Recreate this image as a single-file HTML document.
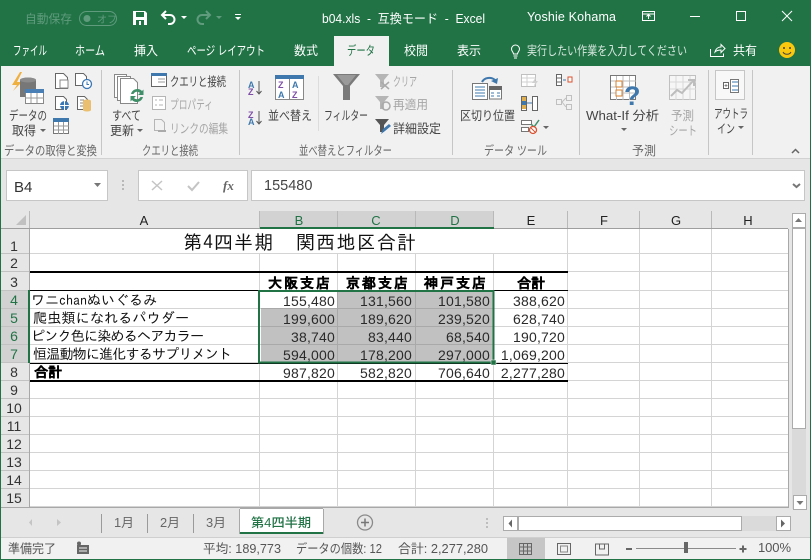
<!DOCTYPE html>
<html lang="ja"><head><meta charset="utf-8"><title>b04.xls</title>
<style>
html,body{margin:0;padding:0;background:#e6e6e6;width:811px;height:560px;overflow:hidden}
svg{display:block}
text{font-family:"Liberation Sans","Noto Sans CJK JP",sans-serif;white-space:pre}
.u{font-size:12.5px;fill:#444}
.g{font-size:12.5px;fill:#a6a6a6}
.l{font-size:12.5px;fill:#666}
.w{font-size:12.5px;fill:#fff}
.h{font-size:13px;fill:#222;text-anchor:middle}
.hs{font-size:13px;fill:#217346;text-anchor:middle}
.r{font-size:14px;fill:#333;text-anchor:middle}
.rs{font-size:14px;fill:#217346;text-anchor:middle}
.n{font-size:14px;fill:#2a2a2a;text-anchor:end;letter-spacing:.2px}
.c{font-family:"IPAGothic","Liberation Sans",sans-serif;font-size:14px;fill:#111}
.b{font-family:"IPAGothic","Liberation Sans",sans-serif;font-size:14px;fill:#000;font-weight:bold;stroke:#000;stroke-width:.35px}
.s{font-size:12.5px;fill:#555}
</style></head><body>
<svg width="811" height="560" viewBox="0 0 811 560" xmlns="http://www.w3.org/2000/svg">
<!-- backgrounds -->
<rect width="811" height="560" fill="#e6e6e6"/>
<rect width="811" height="66" fill="#217346"/>
<rect y="66" width="811" height="92" fill="#f1f1f1"/>
<rect y="158" width="811" height="1" fill="#d2d2d2"/>
<rect x="334" y="36" width="55" height="30" fill="#f1f1f1"/>
<!-- title bar -->
<text x="25" y="23" style="font-size:12px" fill="#5f9b7c" textLength="47" lengthAdjust="spacingAndGlyphs">自動保存</text>
<rect x="79.5" y="11.5" width="37" height="14" rx="7" fill="none" stroke="#5f9b7c"/>
<circle cx="87" cy="18.5" r="3.5" fill="#5f9b7c"/>
<text x="97" y="23" style="font-size:10px" fill="#5f9b7c">オフ</text>
<path d="M133 11h12l2 2v12h-14z" fill="#fff"/><rect x="136" y="12" width="8" height="5" fill="#217346"/><rect x="136" y="20" width="8" height="5" fill="#217346"/><rect x="139" y="21" width="2" height="4" fill="#fff"/>
<path d="M166 11l-4 4 4 4M163 15h7a4.500 4.500 0 0 1 0 9h-2" fill="none" stroke="#fff" stroke-width="2"/>
<path d="M181 16h6l-3 3z" fill="#fff"/>
<path d="M206 11l4 4-4 4M209 15h-7a4.500 4.500 0 0 0 0 9h2" fill="none" stroke="#5f9b7c" stroke-width="2"/>
<path d="M216 16h6l-3 3z" fill="#5f9b7c"/>
<rect x="235" y="14" width="6" height="1" fill="#fff"/><path d="M235 17h6l-3 3z" fill="#fff"/>
<text x="322" y="23" class="w" textLength="163" lengthAdjust="spacingAndGlyphs">b04.xls  -  互換モード  -  Excel</text>
<text x="527" y="21" class="w" textLength="89">Yoshie Kohama</text>
<rect x="642.500" y="11.500" width="12" height="9" fill="none" stroke="#fff"/><path d="M642 14h13M648.500 19v-4M646.500 16.500l2-2 2 2" fill="none" stroke="#fff"/>
<rect x="690" y="16" width="10" height="1" fill="#fff"/>
<rect x="736.500" y="11.500" width="9" height="9" fill="none" stroke="#fff"/>
<path d="M782 11l10 10M792 11l-10 10" stroke="#fff"/>
<!-- tabs -->
<text x="13" y="55" class="w" textLength="34" lengthAdjust="spacingAndGlyphs">ファイル</text>
<text x="75" y="55" class="w" textLength="30" lengthAdjust="spacingAndGlyphs">ホーム</text>
<text x="134" y="55" class="w" textLength="24" lengthAdjust="spacingAndGlyphs">挿入</text>
<text x="187" y="55" class="w" textLength="78" lengthAdjust="spacingAndGlyphs">ページ レイアウト</text>
<text x="294" y="55" class="w" textLength="24" lengthAdjust="spacingAndGlyphs">数式</text>
<text x="347" y="55" style="font-size:12.5px" fill="#217346" textLength="28" lengthAdjust="spacingAndGlyphs">データ</text>
<text x="404" y="55" class="w" textLength="24" lengthAdjust="spacingAndGlyphs">校閲</text>
<text x="457" y="55" class="w" textLength="24" lengthAdjust="spacingAndGlyphs">表示</text>
<path d="M513.500 56h4M514 58h3M513.500 54c0-2-2-2.500-2-5a4 4 0 0 1 8 0c0 2.500-2 3-2 5z" fill="none" stroke="#fff"/>
<text x="527" y="55" style="font-size:12.5px" fill="#d8e8df" textLength="160" lengthAdjust="spacingAndGlyphs">実行したい作業を入力してください</text>
<path d="M710.500 49v7.500h13v-3M715 52c1-4 4-5 6-5v-2.500l4 4-4 4v-2.500c-2 0-4 0-6 2z" fill="none" stroke="#fff"/>
<text x="733" y="55" class="w" textLength="24" lengthAdjust="spacingAndGlyphs">共有</text>
<circle cx="787" cy="50" r="8" fill="#fcc80e"/><circle cx="784" cy="48" r="1" fill="#444"/><circle cx="790" cy="48" r="1" fill="#444"/><path d="M783 52c1.500 3 6.500 3 8 0" fill="none" stroke="#444"/>
<!-- group separators -->
<g fill="#c6c6c6"><rect x="101" y="70" width="1" height="85"/><rect x="239" y="70" width="1" height="85"/><rect x="452" y="70" width="1" height="85"/><rect x="579" y="70" width="1" height="85"/><rect x="708" y="70" width="1" height="85"/><rect x="752" y="70" width="1" height="85"/><rect x="318" y="76" width="1" height="55" fill="#dcdcdc"/></g>
<!-- get data group -->
<path d="M20 72l-8 13h5l-4 6 9-9h-5l5-10z" fill="#f0b040"/>
<path d="M20 80c0-3 16-3 16 0v17H20z" fill="#777"/><ellipse cx="28" cy="80" rx="8" ry="2.500" fill="#8c8c8c"/>
<rect x="25.500" y="89.500" width="18" height="14" fill="#fff" stroke="#888"/><rect x="25" y="89" width="19" height="4" fill="#4a7fb5"/><path d="M25 98h19M31 93v10M37 93v10" stroke="#999"/>
<text x="9" y="120" class="u" textLength="38" lengthAdjust="spacingAndGlyphs">データの</text>
<text x="12" y="135" class="u" textLength="24" lengthAdjust="spacingAndGlyphs">取得</text><path d="M40 129h6l-3 3z" fill="#666"/>
<path d="M55.500 73.500h8l4 4v11h-12z" fill="#fff" stroke="#666"/><path d="M60 80h8v8h-8z" fill="#fff" stroke="#888"/>
<path d="M75.500 73.500h8l3 3v9h-11z" fill="#fff" stroke="#666"/><circle cx="87" cy="84" r="4.500" fill="#fff" stroke="#3a78b5" stroke-width="1.300"/><path d="M87 81.500v3h2" stroke="#3a78b5" fill="none"/>
<path d="M55.500 96.500h8l3 3v10h-11z" fill="#fff" stroke="#666"/><circle cx="64.500" cy="105.500" r="4.500" fill="#3a78b5"/><path d="M60 105.500h9M64.500 101v9" stroke="#fff"/>
<path d="M77.500 96.500h7l3 3v10h-10z" fill="#fff" stroke="#666"/><path d="M80 100h4M80 103h3M80 106h3" stroke="#888"/><path d="M83 101c0-2 8-2 8 0v9c0 2-8 2-8 0z" fill="#eac070"/>
<rect x="53.500" y="118.500" width="15" height="15" fill="#fff" stroke="#777"/><rect x="53" y="118" width="16" height="4" fill="#3f78ad"/><path d="M54 126h15M54 130h15M58.500 122v12M63.500 122v12" stroke="#999"/>
<text x="4" y="155" class="l" textLength="93" lengthAdjust="spacingAndGlyphs">データの取得と変換</text>
<!-- queries -->
<path d="M114.500 74.500h12v23h-12z" fill="#fff" stroke="#888"/><path d="M117.500 76.500h13v24h-13z" fill="#fff" stroke="#888"/><path d="M120.500 78.500h13l4 4v21h-17z" fill="#fff" stroke="#888"/>
<path d="M131 94a6.500 6.500 0 0 1 11-3l1.500-1.500v5.500h-5.500l2-2a4 4 0 0 0-6.500 1z" fill="#3f8f68"/><path d="M143 97a6.500 6.500 0 0 1-11 3l-1.500 1.500V96h5.500l-2 2a4 4 0 0 0 6.500-1z" fill="#3f8f68"/>
<text x="112" y="120" class="u" textLength="29" lengthAdjust="spacingAndGlyphs">すべて</text>
<text x="110" y="135" class="u" textLength="24" lengthAdjust="spacingAndGlyphs">更新</text><path d="M137 129h6l-3 3z" fill="#666"/>
<rect x="151.500" y="73.500" width="15" height="13" fill="#fff" stroke="#666"/><rect x="151" y="73" width="16" height="3" fill="#3f78ad"/><path d="M158 79h7M158 82h7" stroke="#999"/>
<text x="170" y="86" class="u" textLength="56" lengthAdjust="spacingAndGlyphs">クエリと接続</text>
<rect x="152.500" y="96.500" width="13" height="13" fill="#fff" stroke="#b5b5b5"/><path d="M155 100h2M155 105h2M159 100h4M159 105h4" stroke="#b5b5b5"/>
<text x="170" y="109" class="g" textLength="43" lengthAdjust="spacingAndGlyphs">プロパティ</text>
<path d="M154.500 119.500h7l3 3v8h-10z" fill="none" stroke="#b5b5b5"/><path d="M158 131h8" stroke="#aaa" stroke-width="2"/>
<text x="170" y="133" class="g" textLength="58" lengthAdjust="spacingAndGlyphs">リンクの編集</text>
<text x="142" y="155" class="l" textLength="56" lengthAdjust="spacingAndGlyphs">クエリと接続</text>
<!-- sort -->
<text x="248" y="88" fill="#3f78ad" style="font-size:9px;font-weight:bold">A</text><text x="248" y="95" fill="#7e4ea7" style="font-size:9px;font-weight:bold">Z</text><text x="248" y="118" fill="#7e4ea7" style="font-size:9px;font-weight:bold">Z</text><text x="248" y="125" fill="#3f78ad" style="font-size:9px;font-weight:bold">A</text>
<path d="M259 81v13M256.500 91l2.500 3 2.500-3M259 111v13M256.500 121l2.500 3 2.500-3" fill="none" stroke="#555"/>
<rect x="275.500" y="75.500" width="28" height="24" fill="#fff" stroke="#888"/><rect x="275" y="75" width="29" height="4" fill="#3f78ad"/><path d="M289.500 79v20" stroke="#888"/>
<text x="278" y="88" style="font-size:9px;font-weight:bold" fill="#7e4ea7">Z</text><text x="278" y="98" style="font-size:9px;font-weight:bold" fill="#3f78ad">A</text><text x="292" y="88" style="font-size:9px;font-weight:bold" fill="#3f78ad">A</text><text x="292" y="98" style="font-size:9px;font-weight:bold" fill="#7e4ea7">Z</text>
<text x="268" y="120" class="u" textLength="44" lengthAdjust="spacingAndGlyphs">並べ替え</text>
<path d="M333 74h27l-10 12v14h-7V86z" fill="#7a7a7a"/><path d="M337 75h19l-8 10h-3z" fill="#9a9a9a"/>
<text x="324" y="120" class="u" textLength="44" lengthAdjust="spacingAndGlyphs">フィルター</text>
<path d="M375 74h14l-5 6v7h-4v-7z" fill="#b5b5b5"/><path d="M381 82l8 7M389 82l-8 7" stroke="#aaa" stroke-width="1.500"/>
<text x="393" y="86" class="g" textLength="24" lengthAdjust="spacingAndGlyphs">クリア</text>
<path d="M375 96h14l-5 6v7h-4v-7z" fill="#b5b5b5"/><circle cx="386" cy="106" r="4" fill="none" stroke="#aaa" stroke-width="1.500"/>
<text x="393" y="109" class="g" textLength="35" lengthAdjust="spacingAndGlyphs">再適用</text>
<path d="M375 119h14l-5 6v7h-4v-7z" fill="#555"/><path d="M381 134l2-5 6-5 2 2-6 5z" fill="#3f78ad"/>
<text x="393" y="133" class="u" textLength="48" lengthAdjust="spacingAndGlyphs">詳細設定</text>
<text x="299" y="155" class="l" textLength="93" lengthAdjust="spacingAndGlyphs">並べ替えとフィルター</text>
<!-- data tools -->
<rect x="472.500" y="83.500" width="15" height="16" fill="#fff" stroke="#777"/><path d="M475 87h10M475 90h10M475 93h10M475 96h10" stroke="#3f78ad"/>
<rect x="489.500" y="86.500" width="12" height="12.500" fill="#fff" stroke="#777"/><rect x="489" y="86" width="13" height="4" fill="#666"/><path d="M491 93h3M497 93h3M491 96h3M497 96h3" stroke="#3f78ad"/>
<path d="M482 82a8 7 0 0 1 13-2" fill="none" stroke="#3f78ad" stroke-width="2"/><path d="M491 81l6 3 1-6z" fill="#3f78ad"/>
<text x="460" y="120" class="u" textLength="55" lengthAdjust="spacingAndGlyphs">区切り位置</text>
<rect x="521.500" y="74.500" width="14" height="12" fill="#fff" stroke="#c0c0c0"/><path d="M522 78h13M522 82h13M527 75v11" stroke="#d2d2d2"/><path d="M536 77l-4 6h3l-2 5 5-7h-3z" fill="#d0d0d0"/>
<rect x="521.500" y="96.500" width="5" height="14" fill="#fff" stroke="#666"/><rect x="522" y="97" width="4" height="4" fill="#e0b050"/><rect x="522" y="101" width="4" height="4" fill="#3f78ad"/><rect x="522" y="105" width="4" height="4" fill="#e0b050"/>
<rect x="532.500" y="96.500" width="5" height="14" fill="#fff" stroke="#666"/><path d="M527 103h5" stroke="#3f78ad"/>
<rect x="521.500" y="120.500" width="10" height="4" fill="#fff" stroke="#777"/><rect x="521.500" y="127.500" width="7" height="4" fill="#fff" stroke="#777"/><path d="M531 124l3 3 5-7" fill="none" stroke="#3f8f68" stroke-width="1.500"/><circle cx="533" cy="130" r="3.500" fill="#fff" stroke="#d9502e" stroke-width="1.300"/><path d="M531 128l4 4" stroke="#d9502e"/>
<path d="M543 126h6l-3 3z" fill="#666"/>
<rect x="556.500" y="74.500" width="5" height="11" fill="#fff" stroke="#666"/><path d="M557 78h4M557 82h4" stroke="#666"/><path d="M563 80h3" stroke="#3f78ad"/><rect x="568" y="77" width="4" height="5" fill="#fff" stroke="#d9502e"/>
<rect x="556.500" y="99.500" width="5" height="5" fill="none" stroke="#c0c0c0"/><rect x="566.500" y="95.500" width="5" height="5" fill="none" stroke="#c0c0c0"/><rect x="566.500" y="104.500" width="5" height="5" fill="none" stroke="#c0c0c0"/><path d="M562 102l4-4M562 102l4 5" stroke="#c0c0c0"/>
<text x="484" y="155" class="l" textLength="63" lengthAdjust="spacingAndGlyphs">データ ツール</text>
<!-- forecast -->
<rect x="610.500" y="75.500" width="25" height="24" fill="#fff" stroke="#777"/><path d="M611 81h25M611 87h25M611 93h25M616.500 76v24M623 76v24M629.500 76v24" stroke="#bdbdbd"/>
<rect x="616" y="81" width="6" height="6" fill="#fff" stroke="#d9812e"/><rect x="616" y="90" width="6" height="6" fill="#fff" stroke="#d9812e"/>
<text x="624" y="105" style="font-size:27px;font-weight:bold" fill="#3f78ad">?</text>
<text x="586" y="120" class="u" textLength="73" lengthAdjust="spacingAndGlyphs">What-If 分析</text>
<path d="M621 128h6l-3 3z" fill="#666"/>
<rect x="669.500" y="75.500" width="26" height="24" fill="#f6f6f6" stroke="#c0c0c0"/><path d="M670 82h26M670 89h26M676 76v24M683 76v24M690 76v24" stroke="#d8d8d8"/><path d="M671 96l6-6 5 3 11-12M688 80h6v6" fill="none" stroke="#bdbdbd" stroke-width="2"/>
<text x="671" y="120" class="g" textLength="23" lengthAdjust="spacingAndGlyphs">予測</text>
<text x="669" y="135" class="g" textLength="28" lengthAdjust="spacingAndGlyphs">シート</text>
<text x="632" y="155" class="l" textLength="24" lengthAdjust="spacingAndGlyphs">予測</text>
<!-- outline -->
<rect x="715.500" y="70.500" width="29" height="29" fill="#f8f8f8" stroke="#c6c6c6"/>
<rect x="723.500" y="82.500" width="5" height="6" fill="#fff" stroke="#666"/><path d="M724.500 85.500h3M726 84v3" stroke="#666" stroke-width=".7"/><path d="M730.500 79.500h8v13h-8z" fill="#fff" stroke="#777"/><path d="M732 82h6M732 86h6M732 90h6" stroke="#3f78ad"/>
<text x="714" y="118" class="u" textLength="34" lengthAdjust="spacingAndGlyphs">アウトラ</text>
<text x="717" y="133" class="u" textLength="18" lengthAdjust="spacingAndGlyphs">イン</text><path d="M738 126h6l-3 3z" fill="#666"/>
<path d="M792 153l3.500-3.500 3.500 3.500" fill="none" stroke="#666" stroke-width="1.500"/>
<!-- formula bar -->
<rect x="6.500" y="170.500" width="101" height="30" fill="#fff" stroke="#c6c6c6"/>
<text x="14" y="192" style="font-size:15px" fill="#333">B4</text>
<path d="M94 183h7l-3.500 4z" fill="#777"/>
<g fill="#b8b8b8"><rect x="122" y="180" width="2" height="2"/><rect x="122" y="184" width="2" height="2"/><rect x="122" y="188" width="2" height="2"/></g>
<rect x="138.500" y="170.500" width="109" height="30" fill="#fff" stroke="#c6c6c6"/>
<path d="M152 181l10 9M162 181l-10 9" stroke="#c4c4c4" stroke-width="1.500"/>
<path d="M188 186l4 4 7-8" fill="none" stroke="#c4c4c4" stroke-width="2"/>
<text x="223" y="190" style="font-family:'Liberation Serif',serif;font-style:italic;font-weight:bold;font-size:13px" fill="#666">fx</text>
<rect x="251.500" y="170.500" width="553" height="30" fill="#fff" stroke="#c6c6c6"/>
<text x="264" y="190" style="font-size:14.500px" fill="#444">155480</text>
<path d="M793 184l3.500 3 3.500-3" fill="none" stroke="#777" stroke-width="2"/>
<!-- headers -->
<rect x="260" y="211" width="234" height="17" fill="#d2d2d2"/>
<rect x="1" y="291" width="28" height="72" fill="#d2d2d2"/>
<path d="M26 215v10H16z" fill="#c0c0c0"/>
<path d="M29.500 211v18M259.500 211v18M337.500 211v18M415.500 211v18M493.500 211v18M567.500 211v18M639.500 211v18M711.500 211v18" stroke="#b9b9b9"/>
<rect x="1" y="228" width="787" height="1" fill="#9e9e9e"/>
<rect x="260" y="227" width="234" height="2" fill="#217346"/>
<text x="144" y="225" class="h">A</text><text x="299" y="225" class="hs">B</text><text x="376" y="225" class="hs">C</text><text x="455" y="225" class="hs">D</text><text x="531" y="225" class="h">E</text><text x="604" y="225" class="h">F</text><text x="676" y="225" class="h">G</text><text x="748" y="225" class="h">H</text>
<!-- sheet -->
<rect x="30" y="229" width="758" height="278" fill="#fff"/>
<path d="M30 253.500h758M30 271.500h758M30 290.500h758M30 308.500h758M30 326.500h758M30 344.500h758M30 362.500h758M30 380.500h758M30 398.500h758M30 416.500h758M30 434.500h758M30 452.500h758M30 470.500h758M30 488.500h758M30 506.500h758" stroke="#d4d4d4"/>
<path d="M259.500 253v254M337.500 253v254M415.500 253v254M493.500 253v254M567.500 229v278M639.500 229v278M711.500 229v278" stroke="#d4d4d4"/>
<rect x="788" y="229" width="1" height="279" fill="#a8a8a8"/>
<rect x="1" y="507" width="788" height="1" fill="#a8a8a8"/>
<!-- row header lines -->
<path d="M1 253.500h28M1 271.500h28M1 290.500h28M1 308.500h28M1 326.500h28M1 344.500h28M1 362.500h28M1 380.500h28M1 398.500h28M1 416.500h28M1 434.500h28M1 452.500h28M1 470.500h28M1 488.500h28" stroke="#c2c2c2"/>
<rect x="29" y="229" width="1" height="278" fill="#a8a8a8"/>
<rect x="28" y="290" width="2" height="73" fill="#217346"/>
<text x="14" y="251" class="r">1</text><text x="14" y="268" class="r">2</text><text x="14" y="287" class="r">3</text><text x="14" y="305" class="rs">4</text><text x="14" y="323" class="rs">5</text><text x="14" y="341" class="rs">6</text><text x="14" y="359" class="rs">7</text><text x="14" y="377" class="r">8</text><text x="14" y="395" class="r">9</text><text x="14" y="413" class="r">10</text><text x="14" y="431" class="r">11</text><text x="14" y="449" class="r">12</text><text x="14" y="467" class="r">13</text><text x="14" y="485" class="r">14</text><text x="14" y="503" class="r">15</text>
<!-- selection fill -->
<rect x="261" y="291" width="232" height="71" fill="#c1c1c1"/>
<rect x="261" y="291" width="76" height="17" fill="#fff"/>
<path d="M261 308.500h232M261 326.500h232M261 344.500h232M337.500 291v71M415.500 291v71" stroke="#a9a9a9"/>
<!-- borders -->
<rect x="30" y="271" width="538" height="2" fill="#000"/>
<rect x="30" y="290" width="538" height="1" fill="#000"/>
<rect x="30" y="363" width="538" height="1" fill="#000"/>
<rect x="30" y="380" width="538" height="2" fill="#000"/>
<!-- cell text -->
<text x="183" y="249" class="c" style="font-size:19px" textLength="233">第4四半期  関西地区合計</text>
<text x="268" y="288" class="b" textLength="62">大阪支店</text><text x="346" y="288" class="b" textLength="62">京都支店</text><text x="424" y="288" class="b" textLength="62">神戸支店</text><text x="517" y="288" class="b" textLength="28">合計</text>
<text x="31" y="305" class="c" textLength="126">ワニchanぬいぐるみ</text>
<text x="33" y="323" class="c" textLength="156">爬虫類になれるパウダー</text>
<text x="31" y="341" class="c" textLength="173">ピンク色に染めるヘアカラー</text>
<text x="33" y="359" class="c" textLength="199">恒温動物に進化するサプリメント</text>
<text x="34" y="377" class="b" textLength="28">合計</text>
<g>
<text x="335" y="306" class="n">155,480</text><text x="412" y="306" class="n">131,560</text><text x="490" y="306" class="n">101,580</text><text x="565" y="306" class="n">388,620</text>
<text x="335" y="324" class="n">199,600</text><text x="412" y="324" class="n">189,620</text><text x="490" y="324" class="n">239,520</text><text x="565" y="324" class="n">628,740</text>
<text x="335" y="342" class="n">38,740</text><text x="412" y="342" class="n">83,440</text><text x="490" y="342" class="n">68,540</text><text x="565" y="342" class="n">190,720</text>
<text x="335" y="360" class="n">594,000</text><text x="412" y="360" class="n">178,200</text><text x="490" y="360" class="n">297,000</text><text x="565" y="360" class="n">1,069,200</text>
<text x="335" y="378" class="n">987,820</text><text x="412" y="378" class="n">582,820</text><text x="490" y="378" class="n">706,640</text><text x="565" y="378" class="n">2,277,280</text>
</g>
<!-- selection border -->
<rect x="259" y="291" width="234.500" height="71.500" fill="none" stroke="#217346" stroke-width="2"/>
<rect x="491" y="360" width="5" height="5" fill="#217346" stroke="#fff" stroke-width=".5"/>
<!-- v scrollbar -->
<rect x="792" y="213" width="14" height="296" fill="#dadada"/>
<rect x="792.500" y="213.500" width="13" height="14" fill="#fff" stroke="#ababab"/>
<path d="M795 222h7l-3.500-4z" fill="#777"/>
<rect x="792.500" y="228.500" width="13" height="200" fill="#fff" stroke="#ababab"/>
<rect x="793.500" y="495.500" width="13" height="14" fill="#fff" stroke="#ababab"/>
<path d="M796.500 501h7l-3.500 4z" fill="#777"/>
<!-- tab strip -->
<g stroke="#9a9a9a"><path d="M101.500 514v19M147.500 514v19M193.500 514v19"/></g>
<path d="M32 519l-3 3.500 3 3.500z" fill="#c4c4c4"/><path d="M57 519l4 3.500-4 3.500z" fill="#c4c4c4"/>
<text x="114" y="527" class="l" textLength="20" lengthAdjust="spacingAndGlyphs">1月</text><text x="160" y="527" class="l" textLength="20" lengthAdjust="spacingAndGlyphs">2月</text><text x="206" y="527" class="l" textLength="20" lengthAdjust="spacingAndGlyphs">3月</text>
<path d="M240 509h83v25h-83z" fill="#fff"/><rect x="240" y="532" width="84" height="2" fill="#217346"/>
<path d="M240 508.500h83" stroke="#a8a8a8"/><path d="M239.500 509v25M323.500 509v25" stroke="#a8a8a8"/>
<text x="251" y="527" style="font-size:12.5px;font-weight:500" fill="#217346" textLength="60" lengthAdjust="spacingAndGlyphs">第4四半期</text>
<circle cx="365" cy="522.500" r="7.500" fill="none" stroke="#8a8a8a" stroke-width="1.300"/><path d="M361 522.500h8M365 518.500v8" stroke="#777" stroke-width="1.500"/>
<g fill="#bdbdbd"><rect x="486" y="518" width="2" height="2"/><rect x="486" y="522" width="2" height="2"/><rect x="486" y="526" width="2" height="2"/></g>
<rect x="503" y="516" width="288" height="15" fill="#dadada"/>
<rect x="503.500" y="516.500" width="14" height="14" fill="#fff" stroke="#ababab"/><path d="M512 519.500l-3.500 4 3.500 4z" fill="#666"/>
<rect x="518.500" y="516.500" width="223" height="14" fill="#fff" stroke="#ababab"/>
<rect x="776.500" y="516.500" width="14" height="14" fill="#fff" stroke="#ababab"/><path d="M781 519.500l4 4-4 4z" fill="#666"/>
<!-- status bar -->
<rect x="0" y="537" width="811" height="23" fill="#f1f1f1"/>
<rect x="0" y="537" width="811" height="1" fill="#cfcfcf"/>
<text x="8" y="553" class="s" textLength="48" lengthAdjust="spacingAndGlyphs">準備完了</text>
<rect x="77" y="545" width="12" height="9" fill="#666"/><path d="M79 548h8M79 551h8" stroke="#f1f1f1"/><circle cx="79" cy="543.500" r="2" fill="#666"/>
<text x="203" y="553" class="s" textLength="78" lengthAdjust="spacingAndGlyphs">平均: 189,773</text>
<text x="296" y="553" class="s" textLength="86" lengthAdjust="spacingAndGlyphs">データの個数: 12</text>
<text x="398" y="553" class="s" textLength="90" lengthAdjust="spacingAndGlyphs">合計: 2,277,280</text>
<rect x="507" y="538" width="38" height="21" fill="#c6c6c6"/>
<rect x="519.500" y="543.500" width="12" height="11" fill="none" stroke="#666"/><path d="M519 547h13M519 551h13M523.500 543v12M527.500 543v12" stroke="#666"/>
<rect x="557.500" y="543.500" width="13" height="11" fill="none" stroke="#666"/><path d="M560.500 546h7v6h-7z" fill="none" stroke="#888"/>
<path d="M595.500 544v11h13v-11zM599.500 544v5h5v-5" fill="none" stroke="#666"/>
<rect x="626" y="548" width="6" height="2" fill="#666"/>
<rect x="636" y="548" width="100" height="1" fill="#8a8a8a"/>
<rect x="684" y="542" width="4" height="11" fill="#666"/>
<path d="M739.500 549h7M743 545.500v7" stroke="#666" stroke-width="2"/>
<text x="758" y="552" style="font-size:13px" fill="#555" textLength="33">100%</text>
<!-- window border -->
<rect x="0" y="66" width="1" height="494" fill="#217346"/>
<rect x="810" y="66" width="1" height="494" fill="#217346"/>
<rect x="0" y="559" width="811" height="1" fill="#217346"/>
</svg>
</body></html>
